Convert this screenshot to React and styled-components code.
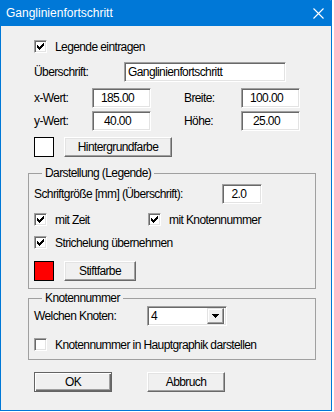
import React from 'react';
import styled, { createGlobalStyle } from 'styled-components';

const GlobalStyle = createGlobalStyle`
  html, body {
    margin: 0;
    padding: 0;
    background: #ffffff;
  }
  body {
    font-family: "Liberation Sans", Arial, sans-serif;
    font-size: 12px;
    color: #000;
  }
`;

const Window = styled.div`
  width: 332px;
  height: 411px;
  box-sizing: border-box;
  border: 1px solid #0078d7;
  border-top: none;
  background: #f0f0f0;
  display: flex;
  flex-direction: column;
`;

const TitleBar = styled.div`
  height: 26px;
  margin: 0 -1px;
  background: #0078d7;
  color: #fff;
  display: flex;
  align-items: center;
  justify-content: space-between;
  padding: 0 8px 0 6px;
  font-size: 12px;
  border-top-right-radius: 2px;
`;

const Content = styled.div`
  display: flex;
  flex-direction: column;
  padding: 14px 0 0 27px;
  letter-spacing: -0.6px;
`;

const Row = styled.div`
  display: flex;
  align-items: center;
  padding-left: ${p => p.$indent ?? 6}px;
  margin-top: ${p => p.$top || 0}px;
  height: ${p => p.$h || 20}px;
`;

const FormGrid = styled.div`
  display: grid;
  grid-template-columns: ${p => p.$cols};
  align-items: center;
  padding-left: ${p => p.$indent ?? 6}px;
  margin-top: ${p => p.$top || 0}px;
  height: ${p => p.$h || 20}px;
`;

const Label = styled.span`
  white-space: nowrap;
`;

const Field = styled.div`
  box-sizing: border-box;
  width: ${p => p.$w}px;
  height: 20px;
  background: #fff;
  border: 1px solid;
  border-color: #a0a0a0 #ffffff #ffffff #a0a0a0;
  box-shadow: inset 1px 1px 0 #696969, inset -1px -1px 0 #e3e3e3;
  display: flex;
  align-items: center;
  justify-content: ${p => (p.$center ? 'center' : 'flex-start')};
  padding: 0 ${p => p.$pr || 0}px 0 ${p => (p.$center ? 0 : 3)}px;
  white-space: nowrap;
  font-size: 12px;
`;

const CheckLabel = styled.label`
  display: flex;
  align-items: center;
  gap: 8px;
  height: 13px;
  white-space: nowrap;
`;

const CheckBox = styled.span`
  box-sizing: border-box;
  width: 13px;
  height: 13px;
  flex: none;
  background: #fff;
  border: 1px solid;
  border-color: #a0a0a0 #ffffff #ffffff #a0a0a0;
  box-shadow: inset 1px 1px 0 #696969, inset -1px -1px 0 #e3e3e3;
  display: flex;
  align-items: flex-start;
  justify-content: flex-start;
  svg {
    display: block;
    margin: 2px 0 0 2px;
  }
`;

const Swatch = styled.span`
  box-sizing: border-box;
  width: 20px;
  height: 20px;
  flex: none;
  border: 1px solid #000;
  background: ${p => p.$color};
`;

const Button = styled.button`
  box-sizing: border-box;
  width: ${p => p.$w}px;
  height: 20px;
  margin-left: ${p => p.$ml || 0}px;
  padding: 0;
  font-family: inherit;
  font-size: 12px;
  letter-spacing: -0.6px;
  color: #000;
  background: #f0f0f0;
  border: 1px solid;
  border-color: ${p => (p.$default ? '#646464' : '#ffffff #696969 #696969 #ffffff')};
  box-shadow: ${p =>
    p.$default
      ? 'inset 1px 1px 0 #ffffff, inset -1px -1px 0 #696969, inset -2px -2px 0 #a0a0a0'
      : 'inset -1px -1px 0 #a0a0a0, inset 1px 1px 0 #e3e3e3'};
  display: flex;
  align-items: center;
  justify-content: center;
`;

const Group = styled.fieldset`
  box-sizing: border-box;
  width: 288px;
  margin: ${p => p.$top || 0}px 0 0 0;
  padding: ${p => p.$pt || 0}px 0 ${p => p.$pb || 0}px 5px;
  border: 1px solid #a0a0a0;
  display: flex;
  flex-direction: column;
  min-width: 0;
`;

const Legend = styled.legend`
  margin-left: 8px;
  padding: 0 3px;
  line-height: 13px;
  font-size: 12px;
`;

const Combo = styled(Field)`
  justify-content: space-between;
  padding: 0 2px 0 3px;
`;

const ComboButton = styled.span`
  box-sizing: border-box;
  width: 17px;
  height: 16px;
  background: #f0f0f0;
  border: 1px solid;
  border-color: #e3e3e3 #696969 #696969 #e3e3e3;
  box-shadow: inset -1px -1px 0 #a0a0a0, inset 1px 1px 0 #ffffff;
  display: flex;
  align-items: center;
  justify-content: center;
`;

const ButtonBar = styled.div`
  display: flex;
  padding-left: 6px;
  margin-top: 12px;
  gap: 35px;
`;

const Tick = () => (
  <svg width="7" height="7" viewBox="0 0 7 7" shapeRendering="crispEdges">
    <path
      d="M0 2h1v3h-1z M1 3h1v3h-1z M2 4h1v3h-1z M3 3h1v3h-1z M4 2h1v3h-1z M5 1h1v3h-1z M6 0h1v3h-1z"
      fill="#000"
    />
  </svg>
);

const Check = ({ checked, children }) => (
  <CheckLabel>
    <CheckBox>{checked && <Tick />}</CheckBox>
    <span>{children}</span>
  </CheckLabel>
);

const CloseIcon = () => (
  <svg width="11" height="11" viewBox="0 0 11 11">
    <path d="M0.5 0.5L10.5 10.5M10.5 0.5L0.5 10.5" stroke="#fff" strokeWidth="1.1" />
  </svg>
);

export default function App() {
  return (
    <>
      <GlobalStyle />
      <Window>
        <TitleBar>
          <span>Ganglinienfortschritt</span>
          <CloseIcon />
        </TitleBar>
        <Content>
          <Row $h={13}>
            <Check checked>Legende eintragen</Check>
          </Row>

          <FormGrid $cols="90px 162px" $top={9}>
            <Label>Überschrift:</Label>
            <Field $w={162}>Ganglinienfortschritt</Field>
          </FormGrid>

          <FormGrid $cols="58px 59px 33px 57px 59px" $top={6}>
            <Label>x-Wert:</Label>
            <Field $w={59} $center $pr={8}>185.00</Field>
            <span />
            <Label>Breite:</Label>
            <Field $w={59} $center $pr={8}>100.00</Field>
          </FormGrid>

          <FormGrid $cols="58px 59px 33px 57px 59px" $top={3}>
            <Label>y-Wert:</Label>
            <Field $w={59} $center $pr={8}>40.00</Field>
            <span />
            <Label>Höhe:</Label>
            <Field $w={59} $center $pr={8}>25.00</Field>
          </FormGrid>

          <Row $top={6}>
            <Swatch $color="#ffffff" />
            <Button $w={108} $ml={10}>Hintergrundfarbe</Button>
          </Row>

          <Group $top={10} $pt={4} $pb={7}>
            <Legend>Darstellung (Legende)</Legend>
            <FormGrid $cols="188px 40px" $indent={0}>
              <Label>Schriftgröße [mm] (Überschrift):</Label>
              <Field $w={40} $center $pr={6}>2.0</Field>
            </FormGrid>
            <FormGrid $cols="114px auto" $indent={0} $top={9} $h={13}>
              <Check checked>mit Zeit</Check>
              <Check checked>mit Knotennummer</Check>
            </FormGrid>
            <Row $indent={0} $top={10} $h={13}>
              <Check checked>Strichelung übernehmen</Check>
            </Row>
            <Row $indent={0} $top={12}>
              <Swatch $color="#ff0000" />
              <Button $w={72} $ml={10}>Stiftfarbe</Button>
            </Row>
          </Group>

          <Group $top={3} $pt={1} $pb={8}>
            <Legend>Knotennummer</Legend>
            <FormGrid $cols="113px 80px" $indent={0}>
              <Label>Welchen Knoten:</Label>
              <Combo $w={80}>
                <span>4</span>
                <ComboButton>
                  <svg width="7" height="4" viewBox="0 0 7 4" shapeRendering="crispEdges">
                    <path d="M0 0h7L3.5 4z" fill="#000" />
                  </svg>
                </ComboButton>
              </Combo>
            </FormGrid>
            <Row $indent={0} $top={12} $h={13}>
              <Check>Knotennummer in Hauptgraphik darstellen</Check>
            </Row>
          </Group>

          <ButtonBar>
            <Button $w={78} $default>OK</Button>
            <Button $w={78}>Abbruch</Button>
          </ButtonBar>
        </Content>
      </Window>
    </>
  );
}
